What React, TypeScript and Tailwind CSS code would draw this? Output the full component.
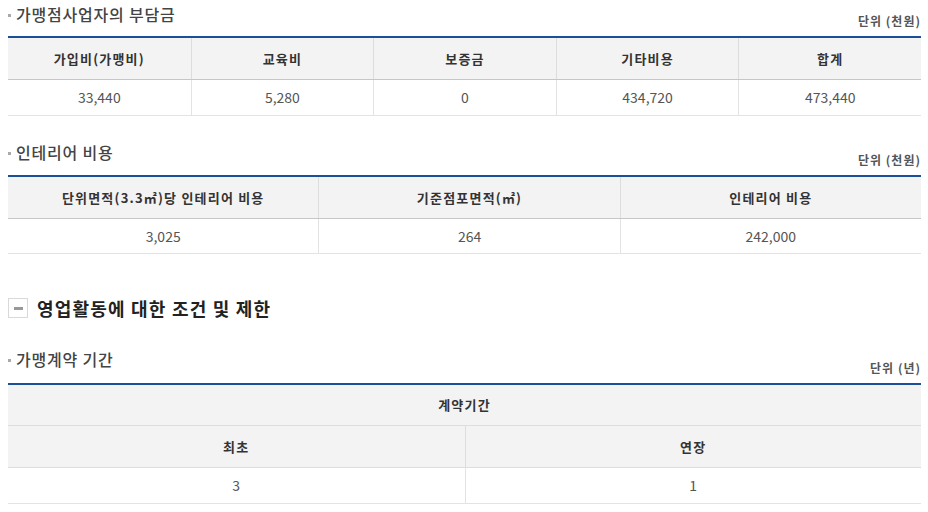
const font = { fontFamily: '"Noto Sans CJK KR", "Noto Sans", sans-serif' }

const SectionHead = ({ title, unit, className = '', titlePad = 'pb-[11px]' }: { title: string; unit: string; className?: string; titlePad?: string }) => (
    <div className={`flex justify-between items-end h-[36px] ${className}`}>
        <div className={`flex items-center gap-[5px] ${titlePad} leading-[22px] text-[16px] font-medium tracking-[0.8px] text-[#444]`}>
            <span className="w-[3px] h-[3px] bg-[#aaa] mt-[2px]" />
            <span>{title}</span>
        </div>
        <div className="pb-[7px] leading-4 text-[12px] font-bold tracking-[1px] text-[#555]">{unit}</div>
    </div>
)

const th = 'border-l border-[#dddddd] first:border-l-0 text-[13px] font-bold tracking-[1.2px] text-[#333] text-center'
const td = 'border-l border-[#e3e3e3] first:border-l-0 text-[14px] text-[#555] text-center'

export default function App() {
    return (
        <div className="bg-white min-h-[512px] pl-2 pr-[7px]" style={font}>
            {/* 가맹점사업자의 부담금 */}
            <SectionHead title="가맹점사업자의 부담금" unit="단위 (천원)" />
            <div className="border-t-2 border-[#1b4f97]">
                <div className="grid grid-cols-5 h-[42px] bg-[#f3f3f3] border-b border-[#c6c6c6]">
                    {['가입비(가맹비)', '교육비', '보증금', '기타비용', '합계'].map(h => (
                        <div key={h} className={`${th} flex items-center justify-center`}>{h}</div>
                    ))}
                </div>
                <div className="grid grid-cols-5 h-[36px] border-b border-[#e3e3e3]">
                    {['33,440', '5,280', '0', '434,720', '473,440'].map((v, i) => (
                        <div key={i} className={`${td} flex items-center justify-center`}>{v}</div>
                    ))}
                </div>
            </div>

            {/* 인테리어 비용 */}
            <SectionHead title="인테리어 비용" unit="단위 (천원)" className="mt-[23px]" titlePad="pb-[12px]" />
            <div className="border-t-2 border-[#1b4f97]">
                <div className="grid grid-cols-[34%_33%_33%] h-[42px] bg-[#f3f3f3] border-b border-[#c6c6c6]">
                    {['단위면적(3.3㎡)당 인테리어 비용', '기준점포면적(㎡)', '인테리어 비용'].map(h => (
                        <div key={h} className={`${th} flex items-center justify-center`}>{h}</div>
                    ))}
                </div>
                <div className="grid grid-cols-[34%_33%_33%] h-[35px] border-b border-[#e3e3e3]">
                    {['3,025', '264', '242,000'].map((v, i) => (
                        <div key={i} className={`${td} flex items-center justify-center`}>{v}</div>
                    ))}
                </div>
            </div>

            {/* 영업활동 */}
            <div className="flex items-center gap-[9px] mt-[44px] h-[20px]">
                <div className="w-[20px] h-[20px] border border-[#d9d9d9] flex items-center justify-center">
                    <span className="w-[9px] h-[3px] bg-[#999]" />
                </div>
                <h2 className="text-[18px] font-bold tracking-[1.2px] text-[#222] leading-none">영업활동에 대한 조건 및 제한</h2>
            </div>

            {/* 가맹계약 기간 */}
            <SectionHead title="가맹계약 기간" unit="단위 (년)" className="mt-[29px]" titlePad="pb-[13px]" />
            <div className="border-t-2 border-[#1b4f97]">
                <div className="h-[41px] bg-[#f3f3f3] border-b border-[#dddddd] flex items-center justify-center text-[13px] font-bold tracking-[1.2px] text-[#333]">
                    계약기간
                </div>
                <div className="grid grid-cols-2 h-[42px] bg-[#f3f3f3] border-b border-[#dddddd]">
                    {['최초', '연장'].map(h => (
                        <div key={h} className={`${th} flex items-center justify-center`}>{h}</div>
                    ))}
                </div>
                <div className="grid grid-cols-2 h-[36px] border-b border-[#e3e3e3]">
                    {['3', '1'].map((v, i) => (
                        <div key={i} className={`${td} flex items-center justify-center`}>{v}</div>
                    ))}
                </div>
            </div>
        </div>
    )
}
